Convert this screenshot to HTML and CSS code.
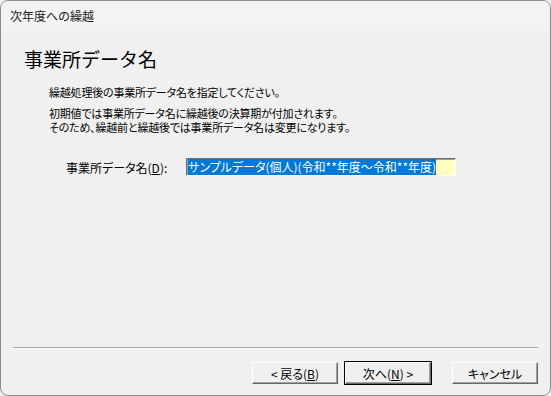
FILE: index.html
```html
<!DOCTYPE html>
<html lang="ja">

<head>
    <meta charset="UTF-8">
    <title>次年度への繰越</title>
    <link rel="stylesheet" href="styles.css">
</head>

<body>
    <div class="window">
        <div class="titlebar">次年度への繰越</div>

        <div class="content">
            <h1 class="heading">事業所データ名</h1>

            <div class="desc">
                <p>繰越処理後の事業所データ名を指定してください。</p>
                <p>初期値では事業所データ名に繰越後の決算期が付加されます。<br>そのため、繰越前と繰越後では事業所データ名は変更になります。</p>
            </div>

            <div class="field">
                <label class="field-label" for="office-name">事業所データ名(<u>D</u>):</label>
                <div class="textbox" id="office-name"><span class="selected">サンプルデータ(個人)(令和**年度～令和**年度)</span></div>
            </div>

            <div class="separator"></div>

            <div class="buttons">
                <button class="btn">&lt; 戻る(<u>B</u>)</button>
                <button class="btn default">次へ(<u>N</u>) &gt;</button>
                <button class="btn cancel">キャンセル</button>
            </div>
        </div>
    </div>
</body>

</html>
```

FILE: styles.css
```css
html,
body {
    margin: 0;
    padding: 0;
    background-color: #f0f0f0;
}

body {
    font-family: "Noto Sans CJK JP", "Noto Sans", sans-serif;
    font-size: 12px;
    color: #000;
}

/* Dialog frame */
.window {
    box-sizing: border-box;
    width: 551px;
    height: 396px;
    border: 1px solid #8c8c8c;
    border-radius: 8px;
    overflow: hidden;
    display: flex;
    flex-direction: column;
    background-color: #f0f0f0;
}

.titlebar {
    height: 30px;
    line-height: 30px;
    padding-left: 9px;
    background-color: #f3f3f3;
    color: #1b1b1b;
    font-size: 12px;
}

.content {
    flex: 1;
    display: flex;
    flex-direction: column;
    padding: 0 12px 11px 12px;
}

.heading {
    margin: 16px 0 0 11px;
    font-size: 19px;
    font-weight: normal;
    line-height: 24px;
    letter-spacing: 0;
}

/* Description text */
.desc {
    margin: 14px 0 0 36px;
    line-height: 14px;
    font-size: 11px;
    font-feature-settings: "palt";
    letter-spacing: -0.2px;
}

.desc p {
    margin: 0 0 7px 0;
}

/* Name field */
.field {
    display: flex;
    align-items: center;
    margin-top: 17px;
    padding-left: 53px;
}

.field-label {
    width: 120px;
    font-size: 12px;
    font-feature-settings: "palt";
}

.textbox {
    box-sizing: border-box;
    width: 270px;
    height: 18px;
    padding: 1px 1px;
    background-color: #ffffc0;
    border: 1px solid;
    border-color: #6d6d6d #ffffff #ffffff #6d6d6d;
    box-shadow: inset 1px 1px 0 #a0a0a0;
    line-height: 14px;
    font-size: 12px;
    white-space: nowrap;
    overflow: hidden;
    font-feature-settings: "palt";
}

.selected {
    background-color: #0078d7;
    color: #fff;
}

/* Bottom separator and buttons */
.separator {
    margin-top: auto;
    height: 1px;
    background-color: #a0a0a0;
    border-bottom: 1px solid #ffffff;
}

.buttons {
    display: flex;
    justify-content: flex-end;
    gap: 7px;
    margin-top: 13px;
}

.btn {
    box-sizing: border-box;
    width: 86px;
    height: 22px;
    padding: 0;
    font-family: inherit;
    font-size: 12px;
    font-feature-settings: "palt";
    background-color: #f0f0f0;
    color: #000;
    border: 1px solid;
    border-color: #ffffff #696969 #696969 #ffffff;
    box-shadow: inset -1px -1px 0 #a0a0a0;
}

.btn.default {
    outline: 1px solid #000;
}

.btn.cancel {
    margin-left: 14px;
}
```
